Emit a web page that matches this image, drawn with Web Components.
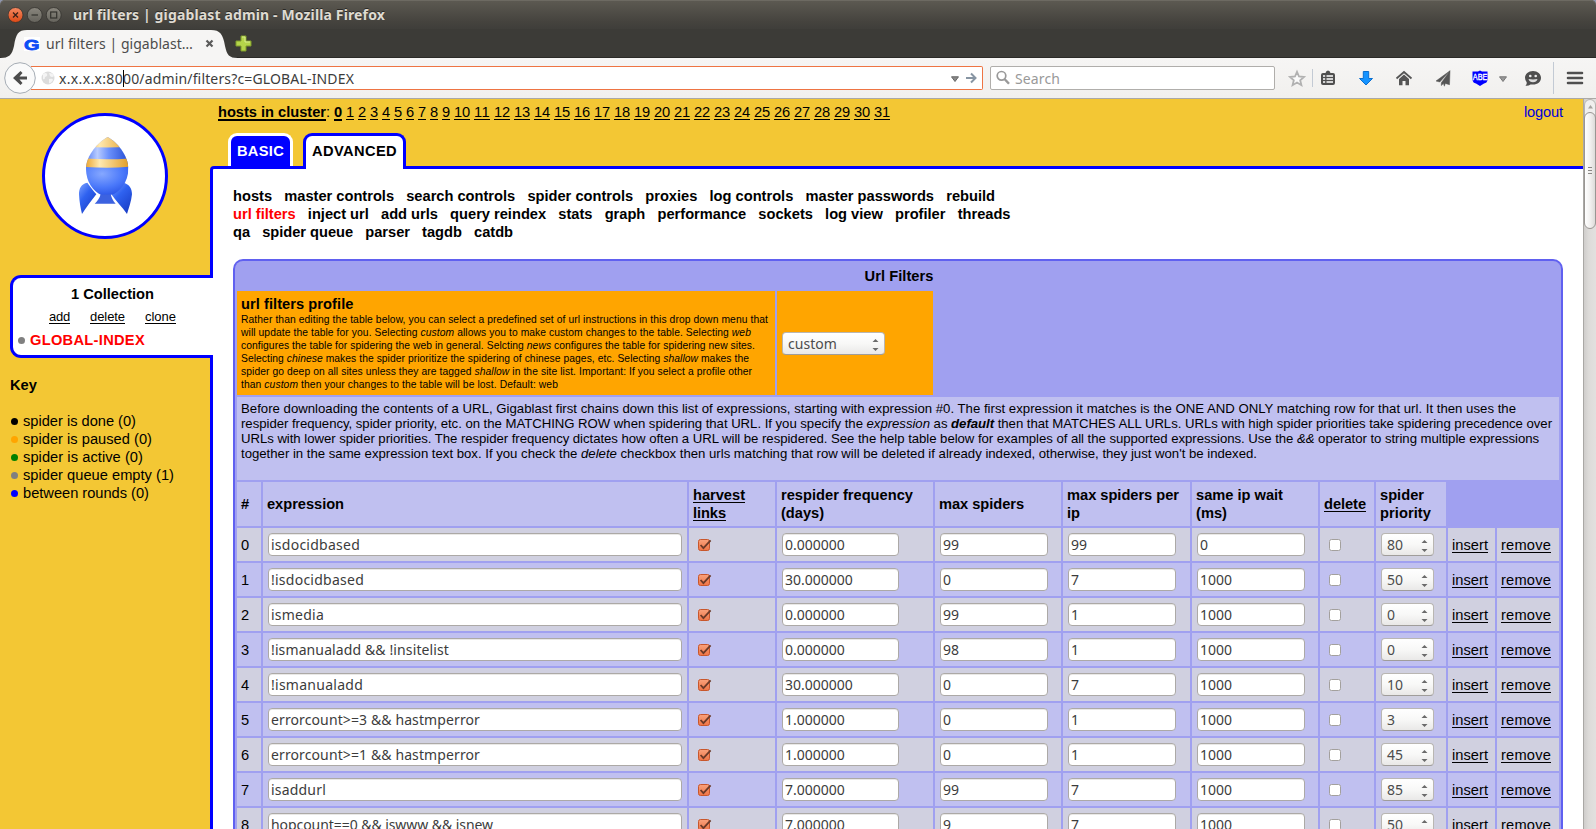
<!DOCTYPE html>
<html lang="en">
<head>
<meta charset="utf-8">
<title>url filters | gigablast admin</title>
<style>
html,body{margin:0;height:100%;overflow:hidden;background:#fff}
body{font:14.67px/18px "Liberation Sans",Arial,sans-serif;color:#000}
</style>
</head>
<body>
<browser-window></browser-window>
<script>
const UI = '"Noto Sans","Open Sans",sans-serif';

function define(name, render, ready) {
  customElements.define(name, class extends HTMLElement {
    connectedCallback() {
      if (this.shadowRoot) return;
      this.attachShadow({mode: 'open'}).innerHTML = render(this).replace(/\n\s*/g, '');
      if (ready) ready(this);
    }
  });
}

// A single line of text tracked out or in to an exact width: <fit-text w="120">
define('fit-text', () => `
<style>:host{display:inline-block;white-space:pre;vertical-align:top;text-decoration:inherit}span{display:inline-block;white-space:pre;text-decoration:inherit}</style>
<span><slot></slot></span>`, el => {
  const w = parseFloat(el.getAttribute('w'));
  const natural = el.shadowRoot.querySelector('span').getBoundingClientRect().width;
  el.style.letterSpacing = ((w - natural) / el.textContent.length) + 'px';
  el.style.width = w + 'px';
});

define('text-field', el => `
<style>
:host{display:block;box-sizing:border-box;height:23px;margin:1px;border:1px solid #aca9a6;border-radius:4px;background:#fff;
box-shadow:inset 0 1px 0 #e9e8e6;font:14px/20px ${UI};color:#3c3c3c;padding:1px 2px 0;white-space:pre;width:${el.getAttribute('width')}px}
</style><slot></slot>`);

define('drop-down', el => `
<style>
:host{display:flex;align-items:center;justify-content:space-between;box-sizing:border-box;height:23px;margin:1px;padding:1px 5px 0 5px;
border:1px solid #b9b6b2;border-bottom-color:#a09d9a;border-radius:4px;background:linear-gradient(#fff,#f8f8f7 50%,#e9e8e7);
font:14px/20px ${UI};color:#4c4c4c;width:${el.getAttribute('width')}px}
svg{display:block;margin-top:1px}
</style><slot></slot><svg width="7" height="13"><path d="M3.5 1L6.5 4H.5zM3.5 13L6.5 10H.5z" fill="#6b6b6b"/></svg>`);

define('check-box', el => `
<style>:host{display:block;margin:1px 0 0 4px;height:17px}svg{display:block}</style>
${el.hasAttribute('checked') ? `
<svg width="16" height="17"><defs><linearGradient id="o" x2="0" y2="1"><stop stop-color="#f9a27c"/><stop offset="1" stop-color="#ef7445"/></linearGradient></defs>
<rect x="1.5" y="2.5" width="11" height="11" rx="2" fill="url(#o)" stroke="#c8562c"/>
<path d="M3.6 8L6.4 11.2L13.6 3.4" fill="none" stroke="#6b3a28" stroke-width="1.800"/></svg>` : `
<svg width="16" height="17"><rect x="1.5" y="2.5" width="11" height="11" rx="2" fill="#fff" stroke="#a3a09d"/></svg>`}`);

define('filter-row', el => {
  const [n, ex, w, freq, ms, mip, wait, pri] = el.getAttribute('values').split('|');
  return `
<style>
:host{display:grid;grid-template-columns:var(--cols);column-gap:2px;height:33px;--bg:${n % 2 ? '#c0c0f0' : '#d0d0e0'}}
div{background:var(--bg);padding:4px;display:flex;align-items:center;min-width:0}
.t{padding-top:5px}
a{text-decoration:underline;text-underline-offset:2px;text-decoration-skip-ink:none}
</style>
<div class="t">${n}</div><div><text-field width="414"><fit-text w="${w}">${ex.replace(/&/g, '&amp;')}</fit-text></text-field></div>
<div><check-box checked></check-box></div>
<div><text-field width="117">${freq}</text-field></div>
<div><text-field width="108">${ms}</text-field></div>
<div><text-field width="108">${mip}</text-field></div>
<div><text-field width="108">${wait}</text-field></div>
<div><check-box></check-box></div>
<div><drop-down width="53">${pri}</drop-down></div>
<div class="t"><a><fit-text w="36">insert</fit-text></a></div><div class="t"><a><fit-text w="50">remove</fit-text></a></div>`;
});

const ROWS = [
  '0|isdocidbased|89|0.000000|99|99|0|80', '1|!isdocidbased|93|30.000000|0|7|1000|50',
  '2|ismedia|53|0.000000|99|1|1000|0', '3|!ismanualadd && !insitelist|178|0.000000|98|1|1000|0',
  '4|!ismanualadd|92|30.000000|0|7|1000|10', '5|errorcount>=3 && hastmperror|209|1.000000|0|1|1000|3',
  '6|errorcount>=1 && hastmperror|209|1.000000|0|1|1000|45', '7|isaddurl|55|7.000000|99|7|1000|85',
  '8|hopcount==0 && iswww && isnew|222|7.000000|9|7|1000|50'];

define('filters-table', () => `
<style>
:host{display:flex;flex-direction:column;gap:2px;box-sizing:border-box;width:1330px;padding:2px;border:2px solid #6060f0;border-bottom:0;
border-radius:10px 10px 0 0;background:#a0a0f0;--cols:24px 424px 86px 156px 126px 127px 126px 54px 70px 47px 62px}
.title{padding:4px 4px 4px 6px;text-align:center;font-weight:bold;height:18px}
.profile{display:grid;grid-template-columns:538px 156px;gap:2px;height:104px}
.profile>div{background:#ffa500;padding:4px;box-sizing:border-box}
.profile>.pick{display:flex;align-items:center}
.small{font-size:10.3px;line-height:13px}
.small fit-text,.help fit-text{display:block}
.help{background:#c0c0f0;padding:4px 4px 19px;font-size:13.2px;line-height:15px;height:60px}
.head{display:grid;grid-template-columns:var(--cols);column-gap:2px;height:44px;font-weight:bold}
.head div{background:#c0c0f0;padding:0 4px;display:flex;flex-direction:column;justify-content:center;align-items:flex-start}
u{text-underline-offset:2px;text-decoration-thickness:1px;text-decoration-skip-ink:none;height:18px}
</style>
<div class="title"><fit-text w="69">Url Filters</fit-text></div>
<div class="profile"><div><b><fit-text w="112.500">url filters profile</fit-text></b>
<div class="small"><fit-text w="527">Rather than editing the table below, you can select a predefined set of url instructions in this drop down menu that</fit-text><fit-text w="510">will update the table for you. Selecting <i>custom</i> allows you to make custom changes to the table. Selecting <i>web</i></fit-text><fit-text w="514">configures the table for spidering the web in general. Selcting <i>news</i> configures the table for spidering new sites.</fit-text><fit-text w="508">Selecting <i>chinese</i> makes the spider prioritize the spidering of chinese pages, etc. Selecting <i>shallow</i> makes the</fit-text><fit-text w="511">spider go deep on all sites unless they are tagged <i>shallow</i> in the site list. Important: If you select a profile other</fit-text><fit-text w="317">than <i>custom</i> then your changes to the table will be lost. Default: web</fit-text></div></div>
<div class="pick"><drop-down width="103"><fit-text w="49">custom</fit-text></drop-down></div></div>
<div class="help"><fit-text w="1275">Before downloading the contents of a URL, Gigablast first chains down this list of expressions, starting with expression #0. The first expression it matches is the ONE AND ONLY matching row for that url. It then uses the</fit-text><fit-text w="1311">respider frequency, spider priority, etc. on the MATCHING ROW when spidering that URL. If you specify the <i>expression</i> as <b><i>default</i></b> then that MATCHES ALL URLs. URLs with high spider priorities take spidering precedence over</fit-text><fit-text w="1298">URLs with lower spider priorities. The respider frequency dictates how often a URL will be respidered. See the help table below for examples of all the supported expressions. Use the <i>&amp;&amp;</i> operator to string multiple expressions</fit-text><fit-text w="1016">together in the same expression text box. If you check the <i>delete</i> checkbox then urls matching that row will be deleted if already indexed, otherwise, they just won't be indexed.</fit-text></div>
<div class="head"><div>#</div><div><fit-text w="77">expression</fit-text></div>
<div><u><fit-text w="52">harvest</fit-text></u><u><fit-text w="33">links</fit-text></u></div>
<div><fit-text w="132">respider frequency</fit-text><fit-text w="43">(days)</fit-text></div>
<div><fit-text w="85">max spiders</fit-text></div>
<div><fit-text w="112">max spiders per</fit-text><fit-text w="13">ip</fit-text></div>
<div><fit-text w="87">same ip wait</fit-text><fit-text w="31">(ms)</fit-text></div>
<div><u><fit-text w="42">delete</fit-text></u></div>
<div><fit-text w="44">spider</fit-text><fit-text w="51">priority</fit-text></div></div>
${ROWS.map(r => `<filter-row values="${r.replace(/&/g, '&amp;')}"></filter-row>`).join('')}`);

define('host-list', () => `
<style>
:host{display:flex;gap:4px;padding:4px 20px 0 8px;height:18px}
.t{width:112px;white-space:nowrap}
a{text-decoration:underline;text-underline-offset:2px;text-decoration-thickness:1px;text-decoration-skip-ink:none}
a.b{text-decoration-thickness:2px;font-weight:bold}
a.out{margin-left:auto;color:#00d;text-decoration:none}
</style>
<span class="t"><a class="b"><fit-text w="108">hosts in cluster</fit-text></a>:</span>
${Array.from({length: 32}, (_, i) => `<a class="${i ? '' : 'b'}"><fit-text w="${i < 10 ? 8 : 16}">${i}</fit-text></a>`).join('')}
<a class="out"><fit-text w="39">logout</fit-text></a>`);

define('section-tabs', () => `
<style>
:host{display:flex;gap:10px;margin:12px 0 0 18px;height:33px;font-weight:bold;position:relative}
div{box-sizing:border-box;border:3px solid #fff;border-bottom:0;border-radius:9px 9px 0 0;padding:6px 0 0 6px;height:33px}
.basic{width:65px;background:#00f;color:#fff}
.adv{width:103px;height:36px;background:#fff;border-color:#00f}
</style>
<div class="basic"><fit-text w="47">BASIC</fit-text></div><div class="adv"><fit-text w="85">ADVANCED</fit-text></div>`);

define('admin-menu', () => `
<style>:host{display:flex;flex-direction:column;font-weight:bold;margin-bottom:18px}span{color:red}</style>
<fit-text w="762">hosts   master controls   search controls   spider controls   proxies   log controls   master passwords   rebuild</fit-text>
<fit-text w="777.500"><span>url filters</span>   inject url   add urls   query reindex   stats   graph   performance   sockets   log view   profiler   threads</fit-text>
<fit-text w="280">qa   spider queue   parser   tagdb   catdb</fit-text>`);

define('rocket-logo', () => `
<style>:host{display:block;width:126px;height:126px;margin-left:42px}svg{display:block}</style>
<svg width="126" height="126" viewBox="126 54 378 378">
<defs>
<linearGradient id="b"><stop stop-color="#3f6df2"/><stop offset=".3" stop-color="#b9ccff"/><stop offset=".55" stop-color="#6a90fb"/><stop offset="1" stop-color="#2148d0"/></linearGradient>
<radialGradient id="l" cx=".4" cy=".25" r=".75"><stop stop-color="#86a8ff"/><stop offset=".6" stop-color="#4a78fa"/><stop offset="1" stop-color="#2a55e6"/></radialGradient>
<linearGradient id="g"><stop stop-color="#e79a1c"/><stop offset=".35" stop-color="#ffe9b0"/><stop offset="1" stop-color="#e09a20"/></linearGradient>
<linearGradient id="f" x2=".7" y2="1"><stop stop-color="#7fa4ff"/><stop offset=".45" stop-color="#2f62f0"/><stop offset="1" stop-color="#1a3fc8"/></linearGradient>
<clipPath id="c"><path d="M323 126C350 140 385 180 385 222C385 262 358 290 338 299H302C282 290 258 262 258 222C258 180 296 140 323 126Z"/></clipPath>
</defs>
<circle cx="315" cy="243" r="184.5" fill="#fff" stroke="#00f" stroke-width="9"/>
<path d="M262 263C244 266 237 280 237 298C238 320 242 340 246 357C260 335 274 318 289 298C280 288 272 276 262 263Z" fill="url(#f)"/>
<path d="M371 263C388 268 396 280 396 298C394 320 386 340 381 357C366 335 348 318 333 296C352 286 362 276 371 263Z" fill="url(#f)"/>
<path d="M302 296H332C334 308 340 318 347 326H284C292 318 300 308 302 296Z" fill="#3c62e0"/>
<g clip-path="url(#c)"><rect x="250" y="120" width="140" height="100" fill="url(#b)"/><rect x="250" y="214" width="140" height="90" fill="url(#l)"/>
<path d="M250 120H390V154Q323 161 250 154Z" fill="url(#g)"/>
<path d="M250 190Q321 196 390 190V215Q321 221 250 215Z" fill="url(#g)"/></g>
</svg>`);

define('side-bar', () => `
<style>
:host{display:block;padding-top:14px}
.box{position:relative;box-sizing:border-box;width:203px;height:83px;margin:36px 0 18px 10px;border:3px solid #00f;border-right:0;border-radius:11px 0 0 11px;background:#fff;padding:7px 0 0 5px}
.name{padding-left:53px;font-weight:bold;height:18px}
.links{display:flex;gap:20px;padding-left:31px;margin:6px 0 7px;font-size:13px;line-height:15px}
.links a{text-decoration:underline;text-underline-offset:2px;text-decoration-skip-ink:none;height:15px}
.row{display:flex;align-items:center;height:18px}
.row i{width:7px;height:7px;border-radius:50%;background:var(--c);margin:1px 5px 0 0}
.box .row{color:red;font-weight:bold}
.key{padding-left:10px}.key .row i{margin:1px 5px 0 1px}
h4{margin:0 0 18px;font-size:inherit;height:18px}
</style>
<rocket-logo></rocket-logo>
<div class="box"><div class="name"><fit-text w="83">1 Collection</fit-text></div>
<div class="links"><a><fit-text w="21">add</fit-text></a><a><fit-text w="35">delete</fit-text></a><a><fit-text w="31">clone</fit-text></a></div>
<div class="row" style="--c:gray"><i></i><fit-text w="115">GLOBAL-INDEX</fit-text></div></div>
<div class="key"><h4><fit-text w="27">Key</fit-text></h4>
${[['#000', 113, 'spider is done (0)'], ['orange', 129, 'spider is paused (0)'], ['green', 120, 'spider is active (0)'], ['gray', 151, 'spider queue empty (1)'], ['blue', 126, 'between rounds (0)']]
  .map(([c, w, t]) => `<div class="row" style="--c:${c}"><i></i><fit-text w="${w}">${t}</fit-text></div>`).join('')}</div>`);

define('scroll-bar', () => `
<style>
:host{display:flex;flex-direction:column;width:13px;box-sizing:border-box;border-left:1px solid #aaa8a5;background:linear-gradient(90deg,#cfcdcb,#dddbd9 40%,#e2e0df)}
.up{height:20px;margin-bottom:-7px;box-sizing:border-box;border:1px solid #b5b3b0;border-radius:6px 6px 0 0;background:#f0efee}
.thumb{height:117px;box-sizing:border-box;border:1px solid #999693;border-radius:6px;background:linear-gradient(90deg,#fff,#f2f1f0 50%,#dddbd9);display:flex;flex-direction:column;align-items:center;justify-content:center;gap:2px}
.thumb i{width:4px;height:1px;background:#8b8885}
svg{display:block;margin:5px auto}
</style><div class="up"><svg width="5" height="4"><path d="M2.500 0L5 3.500H0z" fill="#a5a3a0"/></svg></div><div class="thumb"><i></i><i></i><i></i></div>`);

define('title-bar', () => `
<style>
:host{display:flex;align-items:center;height:29px;box-sizing:border-box;padding:1px 0 0 8px;background:linear-gradient(#5d5a52,#45433e 75%,#3f3e3a);border-radius:5px 5px 0 0;box-shadow:inset 0 1px #6d6a62;
font:bold 14px/18px ${UI};color:#dfdbd2;text-shadow:0 -1px #2a2926}
svg{margin-right:10px}
</style>
<svg width="55" height="17"><defs><linearGradient id="r" x2="0" y2="1"><stop stop-color="#f58a62"/><stop offset="1" stop-color="#dd4814"/></linearGradient><linearGradient id="s" x2="0" y2="1"><stop stop-color="#8a877e"/><stop offset="1" stop-color="#65635c"/></linearGradient></defs>
<circle cx="7.500" cy="8" r="7.500" fill="url(#r)" stroke="#33322e" stroke-width=".8"/><path d="M5 5.500l5 5M10 5.500l-5 5" stroke="#3a2018" stroke-width="1.300"/>
<circle cx="26.700" cy="8" r="7.500" fill="url(#s)" stroke="#33322e" stroke-width=".8"/><path d="M23.500 8h6.500" stroke="#33322e" stroke-width="1.200"/>
<circle cx="45.700" cy="8" r="7.500" fill="url(#s)" stroke="#33322e" stroke-width=".8"/><rect x="42.700" y="5" width="6" height="6" fill="none" stroke="#33322e" stroke-width="1.200"/></svg>
<fit-text w="312">url filters | gigablast admin - Mozilla Firefox</fit-text>`);

define('tab-strip', () => `
<style>
:host{display:flex;align-items:center;height:29px;box-sizing:border-box;background:#3c3b37;border-bottom:1px solid #2b2a27}
.tab{display:flex;align-items:center;height:29px;width:238px;box-sizing:border-box;padding:0 0 0 24px;align-self:flex-start;font:14px/19px ${UI};color:#4c4c4c;
background:url('data:image/svg+xml,<svg xmlns="http://www.w3.org/2000/svg" width="238" height="29"><path d="M0 29C9 29 12 26 14 17C16 5 18 1 27 1H211C220 1 223 5 225 17C227 26 229 29 238 29Z" fill="%23f6f5f4"/></svg>') no-repeat}
.tab fit-text{margin:0 12px 0 6px}
.plus{margin-left:-3px}
</style>
<div class="tab"><svg width="16" height="14"><rect width="16" height="14" fill="#fff"/><text x="0" y="12.500" font-family="Liberation Sans" font-weight="bold" font-size="15" fill="#0b4df5" stroke="#0b4df5" stroke-width=".8" textLength="15.500" lengthAdjust="spacingAndGlyphs">G</text></svg>
<fit-text w="147">url filters | gigablast…</fit-text>
<svg width="9" height="9"><path d="M1.500 1.500l6 6M7.500 1.500l-6 6" stroke="#5b5b5b" stroke-width="2.200"/></svg></div>
<svg class="plus" width="17" height="17"><path d="M6 1h5v5h5v5h-5v5H6v-5H1V6h5z" fill="#b5d54a" stroke="#7f9b2a"/><path d="M7 2h3v5h5" fill="none" stroke="#d8ec8e"/></svg>`);

define('tool-bar', () => `
<style>
:host{display:flex;align-items:center;height:41px;box-sizing:border-box;border-bottom:1px solid #aba9a6;background:linear-gradient(#f6f5f4,#f1f0ee);font:14px/20px ${UI};color:#3c3c3c;padding-left:4px}
.back{position:relative;z-index:1;width:32px;height:32px;flex:none}
.f{box-sizing:border-box;height:24px;background:#fff;display:flex;align-items:center}
.url{width:952px;margin-left:-5px;border:1px solid #ee7443;border-left:0;border-radius:0 2px 2px 0;padding-left:10px}
.url .g{margin-right:4px}
.f fit-text{margin-top:2px}
.caret{width:1px;height:17px;background:#000;margin:0 -1px 0 0}
.dd{margin-left:auto;margin-right:7px}.go{margin-right:5px}
.search{width:285px;margin-left:7px;border:1px solid #b0aeab;border-radius:2px;color:#999;padding-left:4px}
.search svg{margin-right:4px}
svg{display:block;flex:none}
.sep{width:1px;height:18px;background:#c3cad4}
</style>
<svg class="back" viewBox="0 0 32 32"><circle cx="16" cy="16" r="15.300" fill="#fafafa" stroke="#a5acb4"/><path d="M23 14.500V17.500H15.500L18.500 21L16.500 23L9 16L16.500 9L18.500 11L15.500 14.500Z" fill="#4c4c4c"/></svg>
<div class="f url"><svg class="g" width="14" height="14"><circle cx="7" cy="7" r="6.500" fill="#dcdcdc"/><path d="M2 3Q5 1 6 3Q7 5 4 6Q4 9 2 8ZM8 2Q12 2 13 5Q11 7 9 5ZM8 8Q12 7 12 9Q10 13 8 12Z" fill="#f4f4f4"/></svg>
<fit-text w="64">x.x.x.x:80</fit-text><span class="caret"></span><fit-text w="231">00/admin/filters?c=GLOBAL-INDEX</fit-text>
<svg class="dd" width="8" height="6" style="margin-top:2px"><path d="M.5 .8H7.500L4 5.500z" fill="#8a8a8a" stroke="#666"/></svg>
<svg class="go" width="11" height="12"><path d="M0 6H9M5 1.500L9.500 6L5 10.500" fill="none" stroke="#8795a3" stroke-width="2"/></svg></div>
<div class="f search"><svg width="16" height="16"><circle cx="6.500" cy="5.800" r="4.300" fill="none" stroke="#999" stroke-width="1.700"/><path d="M9.500 9L14 13.800" stroke="#999" stroke-width="2.400"/></svg><fit-text w="45">Search</fit-text></div>
<svg style="margin-left:12px" width="20" height="20"><path d="M10 3.800L12 8.500L17 9L13.200 12.300L14.400 17.200L10 14.600L5.600 17.200L6.800 12.300L3 9L8 8.500Z" fill="#fafafa" stroke="#b1b1b1" stroke-width="1.800"/></svg>
<i class="sep" style="margin-left:5px"></i>
<svg style="margin-left:5px" width="20" height="20"><path d="M5 5H7.500Q8 2.500 10 2.500T12.500 5H15Q17 5 17 7V15Q17 17 15 17H5Q3 17 3 15V7Q3 5 5 5Z" fill="#4f4f4f"/><path d="M5 8h2.200M8.500 8h6.500M5 11h2.200M8.500 11h6.500M5 14h2.200M8.500 14h6.500" stroke="#fff" stroke-width="1.700"/></svg>
<svg style="margin-left:18px" width="20" height="20"><path d="M7.300 3.500H12.700V10.500H16.500L10 17L3.500 10.500H7.300Z" fill="#1593ff" stroke="#0a6fd0"/></svg>
<svg style="margin-left:18px" width="20" height="20"><path d="M2.500 10.500L10 4L17.500 10.500" fill="none" stroke="#555" stroke-width="1.800"/><path d="M5 11L10 6.600L15 11V17.300H11.500V13H8.500V17.300H5Z" fill="#555"/></svg>
<svg style="margin-left:19px" width="20" height="20"><path d="M17 2.800L3 13L6.800 14L17 2.800L8.300 14.800V17.600L10.400 15.600L11.400 18.200L12.300 15.400L16.500 16.700Z" fill="#555" stroke="#555" stroke-width=".5"/></svg>
<svg style="margin-left:17px" width="20" height="20"><path d="M2.500 3.500H8L10 2.500L12 3.500H17.500V12Q17 15 14 15.500L10 18L6 15.500Q3 15 2.500 12Z" fill="#00f"/><text x="2.800" y="11.500" font-family="Liberation Sans" font-size="9.500" fill="#fff" stroke="#fff" stroke-width=".35" textLength="14.500" lengthAdjust="spacingAndGlyphs">ABE</text></svg>
<svg style="margin-left:9px;margin-top:2px" width="8" height="6"><path d="M.5 .8H7.500L4 5.500z" fill="#999" stroke="#777"/></svg>
<svg style="margin-left:16px" width="20" height="20"><path d="M10 3C14.600 3 18 6 18 9.800C18 13.800 14.600 16.600 10 16.600L7.500 16.400Q5.500 18.200 2.500 17.800Q4.200 16.500 3.700 14.200Q2 12.300 2 9.800C2 6 5.400 3 10 3Z" fill="#4f4f4f"/><circle cx="7.300" cy="8" r="1.300" fill="#eee"/><circle cx="12.700" cy="8" r="1.300" fill="#eee"/><path d="M5.500 11Q10 11.800 14.500 11Q13.500 14.200 10 14.200T5.500 11Z" fill="#ddd"/></svg>
<i class="sep" style="margin-left:10px;height:32px"></i>
<svg style="margin-left:11px" width="20" height="20"><path d="M3 5h14M3 10h14M3 15h14" stroke="#4f4f4f" stroke-width="2.600" stroke-linecap="round"/></svg>`);

define('browser-window', () => `
<style>
:host{display:flex;flex-direction:column;width:1596px;height:829px;overflow:hidden;background:linear-gradient(#8f96ad 0 6px,#3c3b37 6px)}
.view{flex:1;min-height:0;display:grid;grid-template-columns:210px 1fr 13px;grid-template-rows:730px;background:#f3c734}
side-bar{position:relative;z-index:1}
.col{display:flex;flex-direction:column;min-width:0}
main{flex:1;min-height:0;overflow:hidden;background:#fff;border:3px solid #00f;border-right:0;border-bottom:0;border-radius:4px 0 0 0;padding:18px 0 0 20px}
</style>
<title-bar></title-bar><tab-strip></tab-strip><tool-bar></tool-bar>
<div class="view"><side-bar></side-bar>
<div class="col"><host-list></host-list><section-tabs></section-tabs><main><admin-menu></admin-menu><filters-table></filters-table></main></div>
<scroll-bar></scroll-bar></div>`);
</script>
</body>
</html>
